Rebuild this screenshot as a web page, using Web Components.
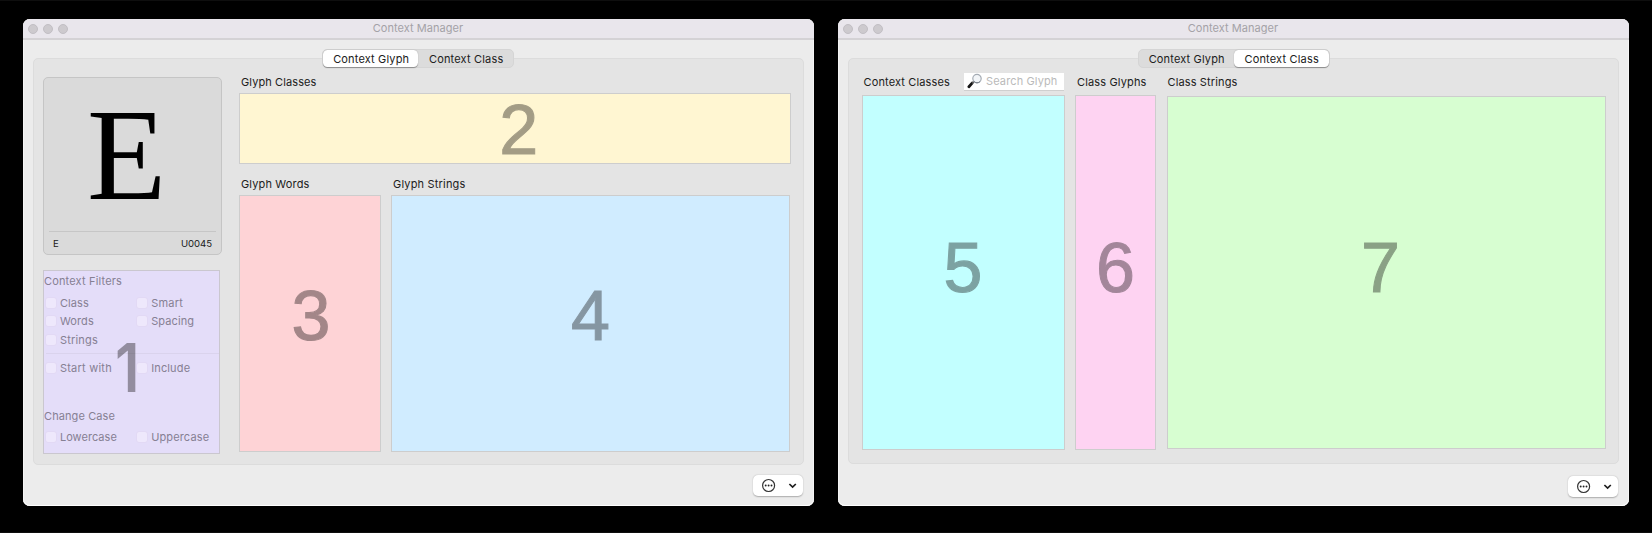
<!DOCTYPE html>
<html lang="en">
<head>
<meta charset="utf-8">
<title>Context Manager</title>
<style>
html,body{margin:0;height:100%;background:#000;overflow:hidden}
body{box-sizing:border-box;height:533px;border-top:1px solid #0e0e0e;border-bottom:1px solid #0e0e0e;font:11px/14px Inter,"Liberation Sans",sans-serif;color:#202020}
</style>
</head>
<body>
<cm-desktop></cm-desktop>
<script>
const define = (name, html, setup) => customElements.define(name, class extends HTMLElement {
  connectedCallback() {
    if (this.shadowRoot) return;
    this.attachShadow({mode: 'open'}).innerHTML = typeof html === 'function' ? html(this) : html;
    if (setup) setup(this);
  }
});

// Label whose tracking is adjusted to fill a given width.
define('cm-label', el => `<style>
:host{display:block;width:${el.getAttribute('w')}px;height:14px;white-space:nowrap;flex:none}
span{display:inline-block}</style><span><slot></slot></span>`, el => {
  const s = el.shadowRoot.querySelector('span');
  const target = +el.getAttribute('w'), n = el.textContent.length;
  s.style.letterSpacing = ((target - s.getBoundingClientRect().width) / n).toFixed(3) + 'px';
});

define('cm-titlebar', `<style>
:host{display:grid;grid-template-columns:1fr auto 1fr;align-items:center;height:19px;background:#e9e6ec;border-bottom:2px solid #d4d2d5;border-radius:7px 7px 0 0;box-sizing:content-box;color:#a4a2a7}
.d{display:flex;gap:5.2px;padding-left:4.6px}
i{width:8px;height:8px;border:1px solid #c2bfc4;background:#cdcace;border-radius:50%}
cm-label{position:relative;left:-.5px;top:-.5px}
</style><div class="d"><i></i><i></i><i></i></div><cm-label w="90.5">Context Manager</cm-label>`);

define('cm-tabs', el => { const a = el.getAttribute('active'); return `<style>
:host{display:flex;box-sizing:border-box;width:192px;height:19px;margin:9px auto -10px;position:relative;z-index:1;left:${el.getAttribute('dx')}px;background:#dcdcdc;border:1px solid #d5d5d5;border-radius:5px}
div{flex:1;display:grid;place-items:center;border-radius:4.5px;height:17px}
cm-label{position:relative;left:.7px}
.on{background:#fff;box-shadow:0 .5px 1px rgba(0,0,0,.35)}
</style><div class="${a==='0'?'on':''}"><cm-label w="76">Context Glyph</cm-label></div><div class="${a==='1'?'on':''}"><cm-label w="74.5">Context Class</cm-label></div>`; });

define('cm-area', el => `<style>
:host{display:grid;place-items:center;box-sizing:border-box;border:1px solid #cdcdcd;background:${el.getAttribute('fill')}}
span{font:70px/72px "Liberation Sans",Arial,sans-serif;color:#040000;opacity:.36;-webkit-text-stroke:1.1px #040000;transform:translate(${el.getAttribute('dx')||0}px,${el.getAttribute('dy')||0}px)}
</style><span><slot></slot></span>`);

define('cm-glyph-card', `<style>
:host{display:flex;flex-direction:column;box-sizing:border-box;height:178px;width:179px;border:1px solid #c5c5c5;border-radius:5px;background:#dadada}
.g{flex:1;display:grid;place-items:center;font:131px/150px "Liberation Serif","Times New Roman",serif;color:#000}
.g span{transform:translate(-5.5px,-.5px) scaleX(.99)}
.m{display:flex;justify-content:space-between;margin:0 5px;padding:5px 4px 0;height:17px;border-top:1px solid #c6c6c6;font-size:9.6px}
</style><div class="g"><span>E</span></div><div class="m"><cm-label w="7">E</cm-label><cm-label w="31">U0045</cm-label></div>`);

define('cm-check', `<style>
:host{display:flex;align-items:center;height:18.3px}
i{box-sizing:border-box;width:12px;height:12px;margin:0 3.4px 0 .5px;background:#eee8fc;border:1px solid #e2d9f5;border-radius:3px;flex:none}
</style><i></i><slot></slot>`);

define('cm-filters', `<style>
:host{display:block;position:relative;box-sizing:border-box;width:177px;height:184px;margin-top:15px;padding-top:3px;border:1px solid #cac7cf;background:#e4ddf9;color:#868093}
.g{display:grid;grid-template-columns:91.3px 1fr}
.a{margin-top:6px}.b{margin-top:5px}.c{margin-top:32px}
hr{border:0;height:1px;background:#dad3ed;margin:4px 0 0 2px}
b{position:absolute;left:66.5px;top:63px;font:600 67.5px/68px Inter,sans-serif;color:rgba(4,0,0,.36);transform:scaleX(.86);transform-origin:100% 50%}
</style><cm-label w="78">Context Filters</cm-label>
<div class="g a"><cm-check><cm-label w="29">Class</cm-label></cm-check><cm-check><cm-label w="32">Smart</cm-label></cm-check>
<cm-check><cm-label w="34">Words</cm-label></cm-check><cm-check><cm-label w="43">Spacing</cm-label></cm-check>
<cm-check><cm-label w="38">Strings</cm-label></cm-check></div><hr>
<div class="g b"><cm-check><cm-label w="52">Start with</cm-label></cm-check><cm-check><cm-label w="39">Include</cm-label></cm-check></div>
<cm-label class="c" w="71">Change Case</cm-label>
<div class="g b"><cm-check><cm-label w="57">Lowercase</cm-label></cm-check><cm-check><cm-label w="58">Uppercase</cm-label></cm-check></div>
<b>1</b>`);

define('cm-menu-button', `<style>
:host{display:flex;align-items:center;box-sizing:border-box;width:50px;height:21px;border-radius:5px;background:#fff;box-shadow:0 .5px 1.5px rgba(0,0,0,.28)}
svg{display:block;width:50px;height:21px}
</style><svg viewBox="0 0 50 21"><circle cx="15.6" cy="10.5" r="6" fill="none" stroke="#333" stroke-width="1.2"/><g fill="#222"><circle cx="12.7" cy="10.5" r=".95"/><circle cx="15.6" cy="10.5" r=".95"/><circle cx="18.5" cy="10.5" r=".95"/></g><path d="M36.4 9l3.2 3.1 3.2-3.1" fill="none" stroke="#1d1d1d" stroke-width="1.7"/></svg>`);

define('cm-search', `<style>
:host{display:flex;align-items:center;box-sizing:border-box;width:100px;height:17.5px;background:#fff;border-bottom:1px solid #cfcfcf;color:#bababa}
svg{width:16px;height:16px;margin:0 2.8px 0 3.7px;flex:none}
</style><svg viewBox="0 0 16 16"><path d="M1.9 13.7l3.2-3.6" stroke="#151515" stroke-width="2.8" stroke-linecap="round"/><path d="M5 10.4l2.1-2.1" stroke="#555" stroke-width="1.6"/><circle cx="10" cy="5.6" r="4.2" fill="#f2f5f8" stroke="#a5acb4" stroke-width="1.2"/><path d="M7 8.5A4.2 4.2 0 0 0 13 8.6" fill="none" stroke="#747b85" stroke-width="1"/></svg><cm-label w="71.5">Search Glyph</cm-label>`);

define('cm-window', `<style>
:host{display:flex;flex-direction:column;box-sizing:border-box;width:791px;height:486.5px;background:#ececec;border-radius:7px;box-shadow:inset 0 -1px 0 #fff,inset 1px 0 0 #f5f5f5,inset -1px 0 0 #f5f5f5;flex:none}
.p{box-sizing:border-box;width:771px;height:var(--panel-h,407px);margin-left:10px;background:#e4e4e4;border:1px solid #dcdcdc;border-radius:5px}
cm-menu-button{margin:var(--menu-gap,10px) 0 0 730px}
</style><cm-titlebar></cm-titlebar><slot name="tabs"></slot><div class="p"><slot></slot></div><cm-menu-button></cm-menu-button>`);

define('cm-glyph-view', `<style>
:host{display:grid;grid-template-columns:178px 552px;column-gap:18px;padding-left:9px}
.l{padding-top:18px}
.r{padding-top:16px}
.t{padding-left:2px;margin-bottom:4px}
.y{height:71px;width:551.5px;margin-bottom:12.5px}
.w{display:grid;grid-template-columns:142px 399px;column-gap:10px}
.w cm-area{height:257px}
</style><div class="l"><cm-glyph-card></cm-glyph-card><cm-filters></cm-filters></div>
<div class="r"><cm-label class="t" w="75.5">Glyph Classes</cm-label><cm-area class="y" fill="#fff6d2" dx="4" dy="-.5">2</cm-area>
<div class="w"><div><cm-label class="t" w="68.5">Glyph Words</cm-label><cm-area fill="#fed3d6" dx="1" dy="-7.5">3</cm-area></div>
<div><cm-label class="t" w="72.5">Glyph Strings</cm-label><cm-area fill="#d0ecff" dy="-7.5">4</cm-area></div></div></div>`);

define('cm-class-view', `<style>
:host{display:grid;grid-template-columns:203px 81px 439px;column-gap:10.5px;padding:14px 0 0 12.5px}
.h{display:flex;justify-content:space-between;height:22px;box-sizing:border-box;padding-left:2px}
.h cm-label{margin-top:2px}
.h cm-search{margin-right:1px}
cm-area{height:355px}
.g{margin-top:1px;height:353px}
.h3{padding-left:1px}
</style><div><div class="h"><cm-label w="86.5">Context Classes</cm-label><cm-search></cm-search></div><cm-area fill="#c2ffff" dy="-5.5">5</cm-area></div>
<div><div class="h"><cm-label w="69.5">Class Glyphs</cm-label></div><cm-area fill="#fed3f2" dy="-5.5">6</cm-area></div>
<div><div class="h h3"><cm-label w="70">Class Strings</cm-label></div><cm-area class="g" fill="#d7fed1" dx="-5.5" dy="-5">7</cm-area></div>`);

define('cm-desktop', `<style>
:host{display:flex;gap:24px;padding:18px 0 0 23px}
.two{--panel-h:406px;--menu-gap:11.5px}
</style><cm-window><cm-tabs slot="tabs" active="0" dx="-.5"></cm-tabs><cm-glyph-view></cm-glyph-view></cm-window>
<cm-window class="two"><cm-tabs slot="tabs" active="1" dx="0"></cm-tabs><cm-class-view></cm-class-view></cm-window>`);
</script>
</body>
</html>
